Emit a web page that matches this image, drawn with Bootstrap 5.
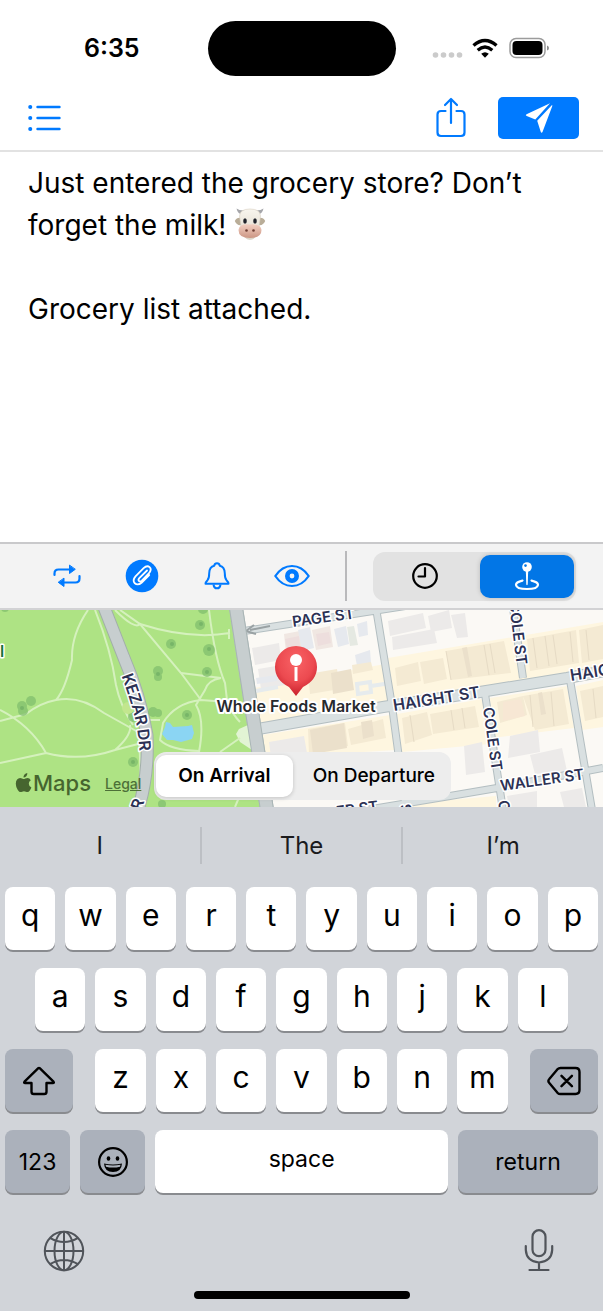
<!DOCTYPE html>
<html lang="en">
<head>
<meta charset="utf-8">
<meta name="viewport" content="width=device-width, initial-scale=1">
<title>Reminder</title>
<link rel="stylesheet" href="https://cdn.jsdelivr.net/npm/bootstrap@5.3.0/dist/css/bootstrap.min.css">
<style>
  :root { --ios-blue: #007aff; }
  body { font-family: Inter, "Liberation Sans", sans-serif; color: #000; background: #fff; min-height: 100vh; }
  button { border: 0; background: none; padding: 0; color: inherit; }
  svg { display: block; flex-shrink: 0; }
  .blue { color: var(--ios-blue); }

  .status-bar { height: 85px; padding-top: 12px; }
  .status-side { flex: 1 1 0; height: 72px; }
  .status-left { padding-left: 16px; }
  .status-right { padding-right: 16px; }
  .clock-time { font-size: 25px; font-weight: 600; line-height: 32px; }
  .island { width: 188px; height: 55px; border-radius: 28px; background: #000; margin-top: 9px; }

  .top-bar { height: 67px; padding: 0 24px 0 28px; gap: 32px; border-bottom: 2px solid #e2e2e2; }
  .send-btn { width: 81px; height: 42px; border-radius: 5px; background: var(--ios-blue); color: #fff; }

  .note { min-height: 390px; padding: 10px 28px; font-size: 28px; line-height: 42px; outline: 0; }
  .note p { margin: 0; min-height: 42px; }
  .cow { display: inline-block; vertical-align: -6px; }

  .tool-bar { height: 68px; padding: 0 27px 0 29px; background: #f3f3f3; border-top: 2px solid #c9c9cb; border-bottom: 2px solid #d2d2d4; }
  .tool-btn { flex: 1 1 0; display: flex; align-items: center; justify-content: center; }
  .tool-line { width: 2px; height: 50px; background: #b9b9bb; margin: 0 26px 0 16px; }
  .segment { border-radius: 12px; padding: 3px 2px; }
  .segment label { display: flex; align-items: center; justify-content: center; flex: 1 1 0; border-radius: 10px; cursor: pointer; }
  .segment-icons { width: 203px; height: 49px; background: #e2e2e2; }
  .segment-icons label:first-of-type { flex-grow: 1.07; padding-right: 4px; }
  .segment-icons .btn-check:checked + label { background: #0276e6; color: #fff; box-shadow: 0 0 5px rgba(0,0,0,.18); }
  .segment-text { width: 297px; height: 48px; background: #ededed; bottom: 7px; left: 154px; font-size: 19px; font-weight: 500; }
  .segment-text label:last-of-type { flex-grow: 1.1; padding-left: 6px; }
  .segment-text .btn-check:checked + label { background: #fff; font-weight: 600; box-shadow: 0 1px 4px rgba(0,0,0,.18); }

  .map-view { height: 197px; background: #aee384; }
  .map-view > svg { width: 100%; height: 100%; }
  .attribution { left: 15px; bottom: 8px; color: #46652f; gap: 14px; }
  .maps-word { font-size: 22px; font-weight: 500; line-height: 32px; }
  .legal { font-size: 14px; font-weight: 500; color: #4d7038; }
  .street { font-size: 16px; font-weight: 600; fill: #2c3154; stroke: #fff; stroke-width: 3px; stroke-linejoin: round; paint-order: stroke; }
  .street-small { font-size: 15px; }
  .place { font-size: 16px; font-weight: 600; fill: #27292e; stroke: #fff; stroke-width: 4px; stroke-linejoin: round; paint-order: stroke; }

  .keyboard { background: #d1d4d9; height: 504px; }
  .suggestions { height: 80px; padding-top: 20px; }
  .suggestions button { flex: 1 1 0; height: 37px; font-size: 24px; color: #1b1b1d; line-height: 37px; }
  .suggestions button + button { border-left: 2px solid #bcbfc4; }
  .keys { padding: 0 5px; gap: 18px; }
  .key-row { gap: 10px; height: 63px; }
  .key-row-inset { padding: 0 30px; }
  .key-row-middle { width: 69.5%; }
  .key { flex: 1 1 0; height: 63px; border-radius: 8px; background: #fff; box-shadow: 0 2px 0 #898b8f; font-size: 30px; line-height: 54px; padding-bottom: 8px; }
  .key-dark { background: #abb1bb; display: flex; align-items: center; justify-content: center; padding: 0; }
  .key-side { flex: 0 0 68px; }
  .key-word { font-size: 23px; }
  .key-space { flex-grow: 4.5; padding-bottom: 6px; }
  .key-return { flex-grow: 2.15; }
  .bottom-icons { padding: 36px 49px 0 43px; color: #50545a; }
  .home-bar { width: 216px; height: 8px; border-radius: 4px; background: #000; margin: 18px auto 0; }
</style>
</head>
<body class="d-flex flex-column">

<header>
  <div class="status-bar d-flex align-items-start">
    <div class="status-side status-left d-flex justify-content-center align-items-center"><span class="clock-time">6:35</span></div>
    <div class="island"></div>
    <div class="status-side status-right d-flex justify-content-center align-items-center">
      <svg width="118" height="24" viewBox="0 0 118 24" aria-hidden="true">
        <g fill="#cbcbcb"><circle cx="3.500" cy="19" r="2.800"/><circle cx="11.500" cy="19" r="2.800"/><circle cx="19.500" cy="19" r="2.800"/><circle cx="27.500" cy="19" r="2.800"/></g>
        <g fill="none" stroke="#000" stroke-width="3.400"><path d="M41.500 9.500q11.500-10 23 0"/><path d="M45.700 14.200q7.300-6.200 14.600 0"/></g>
        <path d="M53 21.800l-3.800-4q3.800-3 7.600 0z"/>
        <rect x="78" y="2.500" width="35" height="19" rx="6" fill="none" stroke="#9c9c9c" stroke-width="1.500"/>
        <rect x="80.500" y="5" width="30" height="14" rx="4"/>
        <path d="M115 9.500q2 .5 2 2.500t-2 2.500z" fill="#8d8d8d"/>
      </svg>
    </div>
  </div>

  <div class="top-bar d-flex align-items-center">
    <button type="button" class="blue me-auto" aria-label="List">
      <svg width="34" height="26" viewBox="0 0 34 26" fill="none" stroke="currentColor" stroke-width="2.400" stroke-linecap="round"><path d="M9.500 2h22M9.500 13h22M9.500 24h22"/><path stroke-width="4" d="M2.200 2h.1M2.200 13h.1M2.200 24h.1"/></svg>
    </button>
    <button type="button" class="blue" aria-label="Share">
      <svg width="30" height="42" viewBox="0 0 30 42" fill="none" stroke="currentColor" stroke-width="2.200" stroke-linecap="round" stroke-linejoin="round"><path d="M9.500 14H5q-3.500 0-3.500 3.500v18q0 3.500 3.500 3.500h20q3.500 0 3.500-3.500v-18q0-3.500-3.500-3.500h-4.500M15 26V2M9 8l6-6 6 6"/></svg>
    </button>
    <button type="button" class="send-btn d-flex align-items-center justify-content-center" aria-label="Send">
      <svg width="28" height="32" viewBox="0 0 28 32" fill="currentColor"><path d="M25 1.200L1.500 12.200q-1.500 1 .2 1.700l8.600 3.600zM27 3L12.200 18.800l3.500 11q.8 1.800 1.800.2L27.400 3.800z"/></svg>
    </button>
  </div>
</header>

<main class="flex-grow-1">
  <div class="note" contenteditable="true" role="textbox" aria-multiline="true" aria-label="Message" spellcheck="false">
    <p>Just entered the grocery store? Don’t forget the milk! <svg class="cow" width="32" height="34" viewBox="0 0 32 34" role="img" aria-label="Cow">
      <defs><linearGradient id="face" x2="0" y2="1"><stop stop-color="#f8f5ee"/><stop offset="1" stop-color="#ddd6c8"/></linearGradient><linearGradient id="muzzle" x2="0" y2="1"><stop stop-color="#f2cfc1"/><stop offset="1" stop-color="#cc9684"/></linearGradient></defs>
      <path d="M2.500 1.500q1 5 6 6.500l3-4.500q-6 .5-9-2zM29.500 1.500q-1 5-6 6.500l-3-4.500q6 .5 9-2z" fill="#a5a6aa"/>
      <path d="M7 11Q3 10 .8 14q2 5 7 4zM25 11q4-1 6.200 3-2 5-7 4z" fill="#b9ad98"/>
      <path d="M16 2Q6 2 5.500 9l2 14Q10 32.500 16 32.500T24.500 23l2-14Q26 2 16 2z" fill="url(#face)" stroke="#d6cfc0" stroke-width=".6"/>
      <path d="M16 17.500Q5 16.500 4.500 23q0 8 11.500 8t11.500-8q-.5-6.500-11.500-5.500z" fill="url(#muzzle)"/>
      <g fill="#20232b"><ellipse cx="11" cy="14" rx="1.800" ry="2.800"/><ellipse cx="21" cy="14" rx="1.800" ry="2.800"/></g>
      <g fill="#6e3d32"><circle cx="12.500" cy="23.500" r="1.300"/><circle cx="19.500" cy="23.500" r="1.300"/></g>
    </svg></p>
    <p><br></p>
    <p>Grocery list attached.</p>
  </div>

  <div class="tool-bar d-flex align-items-center">
    <div class="d-flex flex-grow-1">
      <button type="button" class="blue tool-btn" aria-label="Repeat">
        <svg width="28" height="24" viewBox="0 0 28 24" fill="none" stroke="currentColor" stroke-width="2.200" stroke-linecap="round"><path d="M1.500 11V9.500q0-4 4-4H17M26.500 12v2.500q0 4-4 4H10"/><path d="M16.500 1.500v8L22 5.500zM11 14.500v8L5.500 18.500z" fill="currentColor" stroke-width="1" stroke-linejoin="round"/></svg>
      </button>
      <button type="button" class="blue tool-btn" aria-label="Attachment">
        <svg width="34" height="34" viewBox="0 0 34 34"><circle cx="17" cy="17" r="16.300" fill="currentColor"/><path d="M22 11.500l-7.700 7.700q-1.500 1.700-.3 2.800 1.200 1 2.800-.4l7-7.200q3.400-4 .8-6.300-2.700-2-6 1L10.500 17.300q-3.400 4-.7 7 3 2.600 7-.8l7.400-7.500" fill="none" stroke="#fff" stroke-width="1.800" stroke-linecap="round"/></svg>
      </button>
      <button type="button" class="blue tool-btn" aria-label="Sound">
        <svg width="26" height="28" viewBox="0 0 26 28" fill="none" stroke="currentColor" stroke-width="2" stroke-linejoin="round"><path d="M1.500 21.700q0-1.500 2-3.500 1.700-2 1.700-7Q5.400 5 10.200 3.800 10.700 1.300 13 1.300t2.800 2.500Q20.600 5 20.800 11.200q0 5 1.700 7 2 2 2 3.500z"/><path d="M9.500 22.500q.5 3.800 3.500 3.800t3.500-3.800"/></svg>
      </button>
      <button type="button" class="blue tool-btn" aria-label="Preview">
        <svg width="36" height="24" viewBox="0 0 36 24" fill="none" stroke="currentColor"><path d="M1.300 12Q8 2 18 2t16.700 10Q28 22 18 22T1.300 12z" stroke-width="2.200" stroke-linejoin="round"/><circle cx="18" cy="12" r="4.700" stroke-width="4.600"/></svg>
      </button>
    </div>
    <div class="tool-line"></div>
    <div class="segment segment-icons d-flex" role="group" aria-label="Trigger">
      <input class="btn-check" type="radio" name="trigger" id="byTime">
      <label for="byTime" aria-label="Time"><svg width="28" height="28" viewBox="0 0 28 28" fill="none" stroke="currentColor" stroke-width="2.200" stroke-linecap="round" stroke-linejoin="round"><circle cx="14" cy="14" r="11.800"/><path d="M14 6v8.500H7.500"/></svg></label>
      <input class="btn-check" type="radio" name="trigger" id="byPlace" checked>
      <label for="byPlace" aria-label="Location"><svg width="26" height="30" viewBox="0 0 26 30" fill="none" stroke="currentColor"><path d="M8.500 19.600Q2 21 2 23.800 2.500 28 13 28t11-4.200q0-2.800-6.500-4.200" stroke-width="2.200" stroke-linecap="round"/><path d="M11.800 9h2.400l-.5 14.500q-.7 1.500-1.400 0z" fill="currentColor" stroke="none"/><circle cx="13" cy="6" r="4.800" fill="currentColor" stroke="none"/><circle cx="11.500" cy="4.600" r="1.300" fill="#0276e6" stroke="none"/></svg></label>
    </div>
  </div>

  <div class="map-view position-relative overflow-hidden">
    <svg viewBox="0 0 603 197" preserveAspectRatio="xMidYMid slice" role="img" aria-label="Map">
      <defs>
        <radialGradient id="pinFill" cx=".5" cy=".3" r=".7"><stop stop-color="#f96366"/><stop offset=".6" stop-color="#ec4a50"/><stop offset="1" stop-color="#c8202b"/></radialGradient>
        <path id="kezar" d="M126 64Q136 90 141 112 145 132 145 165"/>
      </defs>
      <!-- city blocks -->
      <path d="M237 0H603V197H266L258 140z" fill="#fbf9f5"/>
      <path d="M254 78L385 54 392 92 259 113zM388 48L603 12V58L394 90zM397 104L482 89 489 134 402 142zM490 88L567 76 574 118 492 128zM262 125L390 105 396 140 266 148zM576 76L603 70V117L582 120zM365 197L496 186V197z" fill="#fef6e0"/>
      <g fill="#eceae9">
        <path d="M252 38L279 33 281 50 255 55zM258 59L282 55 285 75 261 79zM388 11L423 3 426 18 390 26zM392 27L434 19 437 33 393 40zM451 5L465 3 468 27 457 28z"/>
        <path d="M428 6L449 0 452 18 431 22zM269 132L304 126 307 143 271 147zM464 136L482 132 485 162 466 165zM510 126L538 120 540 142 508 148zM530 145L562 138 567 161 535 164zM507 186L537 181V197H509zM560 182L582 178 586 197H564z"/>
      </g>
      <path d="M284 24L300 21 304 39 286 43zM312 20L330 16 333 37 316 40z" fill="#f0e7e2"/>
      <path d="M298 20L310 17 314 38 302 41zM334 19L346 16 349 34 338 37zM357 14L367 11 368 25 359 27zM355 45L370 40 371 53 357 56zM256 68L277 65V71L257 74z" fill="#e6e9ee"/>
      <path d="M316 24L329 22 331 33 318 36zM285 29L299 26 300 36 287 39z" fill="#eddedd"/>
      <path d="M347 17L354 16 358 35 350 36z" fill="#e5e9e2"/>
      <g fill="#f4ead3">
        <path d="M308 64L337 59 340 79 310 84zM352 55L371 52 373 60 353 64zM395 58L418 52 421 71 397 76zM420 52L443 48 447 69 424 74zM446 41L504 31 511 63 451 70z"/>
        <path d="M527 29L576 20 579 53 530 61zM579 20L603 15V49L582 53zM402 108L427 102 432 125 405 134zM430 104L475 96 479 117 433 124zM497 92L523 86 527 105 500 113zM523 86L563 79 569 114 535 120zM308 119L345 113 348 136 309 144zM348 119L383 109 386 128 351 135zM580 81L603 76V107L585 111z"/>
      </g>
      <g fill="#ebe0cb"><path d="M331 63L351 59 354 80 333 84zM310 120L344 113 347 138 313 144zM361 112L372 110 374 126 363 129zM538 83L542 82 546 104 541 105zM462 38L467 37 472 66 468 67z"/></g>
      <path d="M503 92L521 89 525 106 503 111z" fill="#f7e7d4"/>
      <g fill="none" stroke="#e6dbc5" stroke-width="1"><path d="M446 41l5 29M484 35l5 30M490 34l5 29M533 28l4 30M545 26l4 30M553 25l4 29M570 22l3 30M586 20l3 30M410 105l4 27M451 100l3 20M462 98l3 20M530 85l3 32M551 82l3 34M593 79l3 29"/></g>
      <g fill="none" stroke="#e6ebed" stroke-width="4"><path d="M256 81L278 77M357 74l1 10 13-2-1-10zM371 76L391 73"/></g>
      <!-- streets -->
      <g fill="none">
        <g stroke="#b3bec1">
          <path d="M244 21L470-14M376-2L392 96 406 200M513-2L523 68M485 84L503 200M570 70L592 200M330 206L450 186 497 178 603 158" stroke-width="8"/>
          <path d="M258 119L383 97 480 82 567 68 605 61" stroke-width="12"/>
          <path d="M236-2L258 140 267 200" stroke-width="14"/>
        </g>
        <g stroke="#d9e0e1">
          <path d="M244 21L470-14M376-2L392 96 406 200M513-2L523 68M485 84L503 200M570 70L592 200M330 206L450 186 497 178 603 158" stroke-width="6"/>
          <path d="M258 119L383 97 480 82 567 68 605 61" stroke-width="10"/>
        </g>
        <path d="M250 20L270 16" stroke="#9aa2a4" stroke-width="2"/><path d="M254 15L246 21 256 24" stroke="#9aa2a4" stroke-width="2"/>
      </g>
      <!-- park and its paths -->
      <path d="M0 0H229L250 140 259 197H0z" fill="#aee384"/>
      <path d="M248 115l-9 4-3 5 4 8 12 8z" fill="#e2f4d4"/>
      <g fill="none" stroke="#d5f1bd" stroke-width="2">
        <path d="M88 0Q71 25 72 50 65 80 56 90 40 93 26 104L0 111M56 90Q80 85 104 103L138 122M0 100Q30 115 46 143L0 153M46 143Q80 152 115 140L138 134M115 140Q132 125 130 115M95 0Q111 40 116 75 120 95 133 115M115 0Q135 20 140 14L181 63 201 90"/>
        <path d="M120 0L140 14Q190 30 230 23M229 19v10M209 0Q215 50 225 73L227 90M181 63L221 68Q208 70 205 80L196 95Q205 110 199 142M201 90Q175 93 163 113L160 130Q170 140 199 141M201 90L227 92Q233 105 240 112M220 142L240 128M160 110H150M139 130Q142 170 138 197M240 185L235 197"/>
      </g>
      <path d="M104-3L124 48Q140 85 147 125 149 165 138 200" fill="none" stroke="#a2afaa" stroke-width="13"/>
      <path d="M104-3L124 48Q140 85 147 125 149 165 138 200" fill="none" stroke="#c7cecf" stroke-width="11"/>
      <path d="M236-2L258 140 267 200" fill="none" stroke="#a9b5b5" stroke-width="14"/>
      <path d="M236-2L258 140 267 200" fill="none" stroke="#c7cecf" stroke-width="12"/>
      <g fill="#7fbd6c" opacity=".7"><circle cx="200" cy="15" r="5"/><circle cx="171" cy="34" r="5"/><circle cx="209" cy="40" r="6"/><circle cx="207" cy="62" r="5"/><circle cx="158" cy="61" r="5"/><circle cx="158" cy="67" r="4"/><circle cx="187" cy="105" r="5"/><circle cx="153" cy="102" r="5"/><circle cx="158" cy="103" r="4"/><circle cx="133" cy="107" r="5"/><circle cx="133" cy="152" r="5"/><circle cx="22" cy="96" r="5"/><circle cx="31" cy="91" r="5"/><circle cx="23" cy="101" r="5"/><circle cx="5" cy="-2" r="4"/><circle cx="203" cy="-1" r="5"/><circle cx="162" cy="194" r="4"/></g>
      <g fill="#5f9f5c" opacity=".45"><circle cx="201" cy="14" r="2"/><circle cx="172" cy="34" r="2"/><circle cx="209" cy="39" r="2"/><circle cx="207" cy="62" r="2"/><circle cx="187" cy="105" r="2"/><circle cx="133" cy="152" r="2"/><circle cx="22" cy="98" r="2"/><circle cx="158" cy="64" r="2"/></g>
      <circle cx="128" cy="98" r="6" fill="#c2e68e"/>
      <path d="M165 117l1-5 4 1 3 4 15-1 4-1 2 8-2 6-11 3-8-2h-6l-5-6z" fill="#8bd5f3"/>
      <!-- labels -->
      <g class="street">
        <text transform="translate(293 17) rotate(-8)" class="street-small">PAGE ST</text>
        <text transform="translate(394 101) rotate(-9)">HAIGHT ST</text>
        <text transform="translate(571 71) rotate(-9)">HAIGHT ST</text>
        <text transform="translate(509 -8) rotate(83)" class="street-small">COLE ST</text>
        <text transform="translate(483 98) rotate(82)" class="street-small">COLE ST</text>
        <text transform="translate(501 181) rotate(-8)" class="street-small">WALLER ST</text>
        <text transform="translate(337 207) rotate(-8)" class="street-small">ER ST</text>
        <text transform="translate(412 203) rotate(-98)" class="street-small">S</text>
        <text transform="translate(498 191) rotate(82)" class="street-small">C</text>
        <text transform="translate(141 201) rotate(-70)">R</text>
        <text dy="5"><textPath href="#kezar">KEZAR DR</textPath></text>
        <text x="0" y="47" style="fill:#18733b">l</text>
      </g>
      <text class="place" x="296" y="102" text-anchor="middle">Whole Foods Market</text>
      <path d="M275 57a21 21 0 1 1 42 0q0 13-14 20l-7 9-7-9q-14-7-14-20z" fill="url(#pinFill)"/>
      <circle cx="296" cy="50" r="6" fill="#fff"/><path d="M294.500 57h3v14h-3z" fill="#fff"/>
    </svg>
    <div class="attribution position-absolute d-flex align-items-center">
      <span class="d-flex align-items-center">
        <svg width="18" height="22" viewBox="0 0 18 22" fill="currentColor" aria-hidden="true"><path d="M12.300 1q.2 2-1 3.300T8.500 5.600q-.2-1.800 1-3.100T12.300 1zM15.800 8.200q-2.100 1.300-2 3.600.1 2.700 2.600 3.700-.6 1.600-1.600 3-1.100 1.600-2.300 1.600-.8 0-1.600-.4-1-.4-1.900-.4t-1.900.4q-.8.4-1.500.4-1.400 0-2.800-2.200Q.8 14.900.8 11.700q0-2.600 1.300-4.100 1.200-1.500 3-1.500.9 0 2 .5 1.300.5 1.600.5.400 0 1.700-.5 1.200-.5 2.100-.5 2.100.1 3.300 2.100z"/></svg>
        <span class="maps-word">Maps</span>
      </span>
      <a href="#" class="legal">Legal</a>
    </div>
    <div class="segment segment-text position-absolute d-flex" role="group" aria-label="When">
      <input class="btn-check" type="radio" name="when" id="arrive" checked>
      <label for="arrive">On Arrival</label>
      <input class="btn-check" type="radio" name="when" id="depart">
      <label for="depart">On Departure</label>
    </div>
  </div>
</main>

<footer class="keyboard">
  <div class="suggestions d-flex">
    <button type="button">I</button><button type="button">The</button><button type="button">I’m</button>
  </div>
  <div class="keys d-flex flex-column">
    <div class="key-row d-flex">
      <button type="button" class="key">q</button><button type="button" class="key">w</button><button type="button" class="key">e</button><button type="button" class="key">r</button><button type="button" class="key">t</button><button type="button" class="key">y</button><button type="button" class="key">u</button><button type="button" class="key">i</button><button type="button" class="key">o</button><button type="button" class="key">p</button>
    </div>
    <div class="key-row key-row-inset d-flex">
      <button type="button" class="key">a</button><button type="button" class="key">s</button><button type="button" class="key">d</button><button type="button" class="key">f</button><button type="button" class="key">g</button><button type="button" class="key">h</button><button type="button" class="key">j</button><button type="button" class="key">k</button><button type="button" class="key">l</button>
    </div>
    <div class="key-row d-flex justify-content-between">
      <button type="button" class="key key-dark key-side" aria-label="Shift"><svg width="34" height="30" viewBox="0 0 34 30" fill="none" stroke="currentColor" stroke-width="2.400" stroke-linejoin="round"><path d="M16.300 2.200q.7-.7 1.400 0L31.500 15.700q1 1.300-.7 1.300H24.500v8.700q0 2.300-2.300 2.300H11.800q-2.300 0-2.300-2.300V17H3.200q-1.700 0-.7-1.300z"/></svg></button>
      <div class="key-row key-row-middle d-flex">
        <button type="button" class="key">z</button><button type="button" class="key">x</button><button type="button" class="key">c</button><button type="button" class="key">v</button><button type="button" class="key">b</button><button type="button" class="key">n</button><button type="button" class="key">m</button>
      </div>
      <button type="button" class="key key-dark key-side" aria-label="Delete"><svg width="34" height="30" viewBox="0 0 34 30" fill="none" stroke="currentColor" stroke-width="2.400" stroke-linecap="round" stroke-linejoin="round"><path d="M13.500 2H28.500q4 0 4 4V24q0 4-4 4H13.500q-1.700 0-3-1.200L2.300 17q-1.800-2 0-4l8.200-9.800Q11.800 2 13.500 2zM14.500 9.800l10.400 10.400M24.900 9.800L14.500 20.200"/></svg></button>
    </div>
    <div class="key-row d-flex">
      <button type="button" class="key key-dark key-word">123</button>
      <button type="button" class="key key-dark" aria-label="Emoji"><svg width="32" height="32" viewBox="0 0 32 32"><circle cx="16" cy="16" r="13.900" fill="none" stroke="currentColor" stroke-width="2.200"/><ellipse cx="11.500" cy="12.500" rx="1.800" ry="2.200"/><ellipse cx="20.500" cy="12.500" rx="1.800" ry="2.200"/><path d="M7 17.500q9 2 18 0-.5 8.500-9 8.500T7 17.500z"/><path d="M8.500 18.700q7.500 1.600 15 0l-.5 2q-7 1.800-14 0z" fill="#abb1bb"/></svg></button>
      <button type="button" class="key key-word key-space">space</button>
      <button type="button" class="key key-dark key-word key-return">return</button>
    </div>
  </div>
  <div class="bottom-icons d-flex justify-content-between align-items-center">
    <button type="button" aria-label="Next keyboard"><svg width="42" height="44" viewBox="0 0 42 44" fill="none" stroke="currentColor" stroke-width="2"><circle cx="21" cy="22" r="19.200"/><ellipse cx="21" cy="22" rx="9.500" ry="19.200"/><path d="M21 2.800v38.400M1.800 22h38.400M7 8.800q14 8.400 28 0M7 35.200q14-8.400 28 0"/></svg></button>
    <button type="button" aria-label="Dictate"><svg width="30" height="44" viewBox="0 0 30 44" fill="none" stroke="currentColor" stroke-width="2.200" stroke-linecap="round"><rect x="8.500" y="1.200" width="13" height="26" rx="6.500"/><path d="M1.800 17v4Q2.500 32.500 15 33.500 27.500 32.500 28.200 21v-4M15 34v7M5.500 41h19"/></svg></button>
  </div>
  <div class="home-bar"></div>
</footer>

<script src="https://cdn.jsdelivr.net/npm/bootstrap@5.3.0/dist/js/bootstrap.bundle.min.js"></script>
</body>
</html>
